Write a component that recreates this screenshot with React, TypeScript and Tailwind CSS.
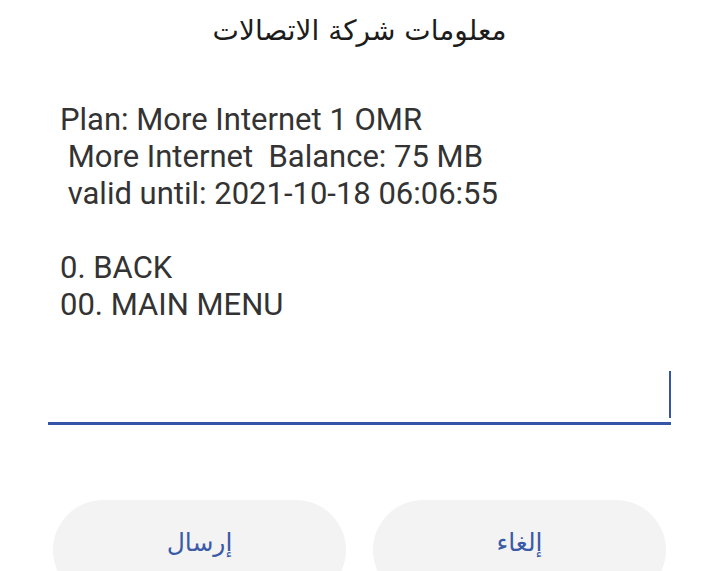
import React from 'react';

export default function App() {
  return (
    <div className="w-[719px] h-[571px] overflow-hidden bg-white" style={{ fontFamily: 'Roboto, sans-serif' }}>
      <div dir="rtl" className="pt-[12px] text-center text-[28px] leading-[38px] text-[#1c1c1c] font-['DejaVu_Sans',sans-serif]">
        معلومات شركة الاتصالات
      </div>

      <div className="mt-[51px] pl-[60px] text-[31px] leading-[37px] text-[#333] whitespace-pre">
        <div>Plan: More Internet 1 OMR</div>
        <div> More Internet  Balance: 75 MB</div>
        <div> valid until: 2021-10-18 06:06:55</div>
        <div>&nbsp;</div>
        <div>0. BACK</div>
        <div>00. MAIN MENU</div>
      </div>

      <div className="mt-[46px] ml-[48px] w-[623px] h-[56px] flex justify-end border-b-[3px] border-[#3556a8]">
        <div className="mt-[2px] w-[2px] h-[47px] bg-[#3556a8]" />
      </div>

      <div className="mt-[75px] flex gap-[27px] pl-[53px]">
        <button className="w-[293px] h-[100px] rounded-full bg-[#f3f3f3] text-[#3a5aa8] text-[25px] pb-[14px] font-['DejaVu_Sans',sans-serif]">
          إرسال
        </button>
        <button className="w-[293px] h-[100px] rounded-full bg-[#f3f3f3] text-[#3a5aa8] text-[25px] pb-[14px] font-['DejaVu_Sans',sans-serif]">
          إلغاء
        </button>
      </div>
    </div>
  );
}
